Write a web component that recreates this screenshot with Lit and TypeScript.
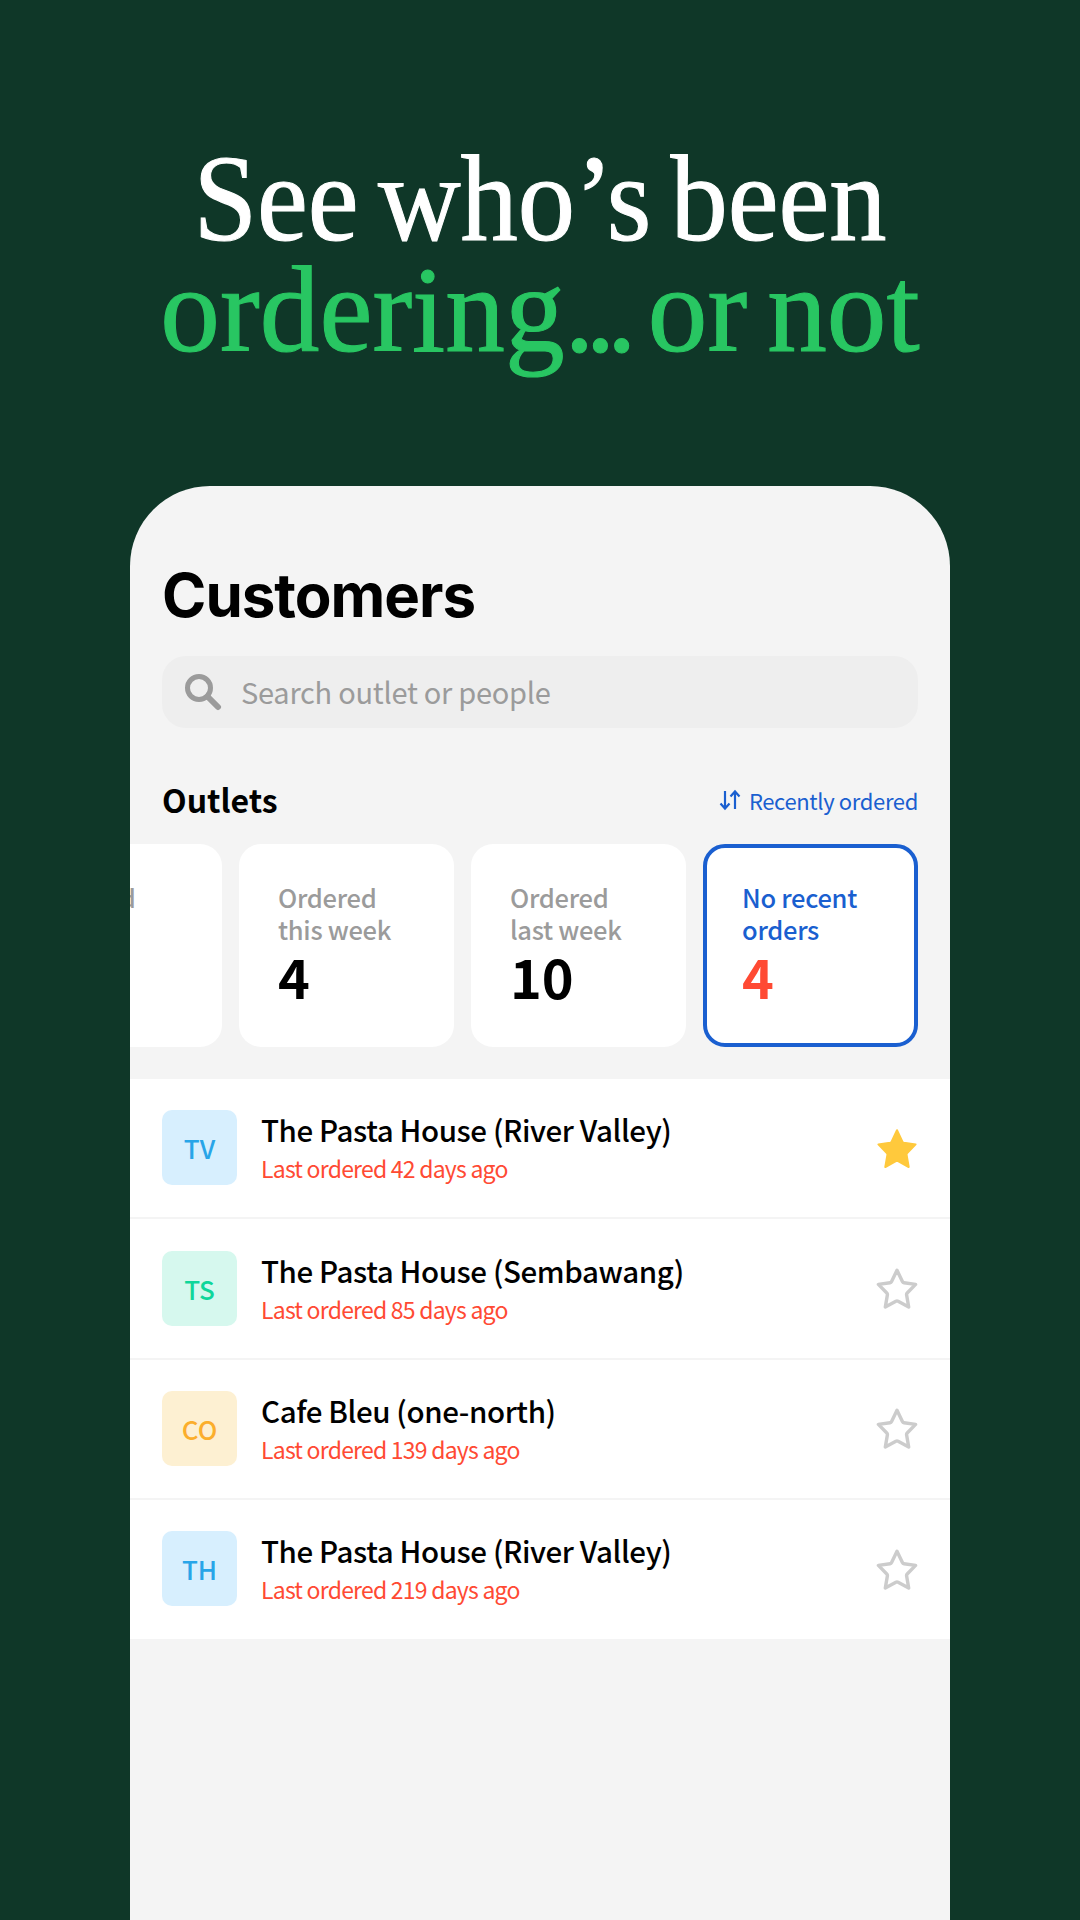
import { LitElement, html, css, svg } from "lit";
import { customElement } from "lit/decorators.js";

const STAR = "M21 3.2 L26.4 14.6 Q26.9 15.6 28 15.8 L39.6 17.4 L31.2 26 Q30.4 26.8 30.6 27.9 L32.7 40 L22.1 34.2 Q21 33.6 19.9 34.2 L9.3 40 L11.4 27.9 Q11.6 26.8 10.8 26 L2.4 17.4 L14 15.8 Q15.1 15.6 15.6 14.6 Z";

const rows = [
  { i: "TV", bg: "#d7effe", fg: "#28a5e8", name: "The Pasta House (River Valley)", days: 42, fav: true },
  { i: "TS", bg: "#d6f8ee", fg: "#0fd69a", name: "The Pasta House (Sembawang)", days: 85, fav: false },
  { i: "CO", bg: "#fdf0d2", fg: "#fbae2c", name: "Cafe Bleu (one-north)", days: 139, fav: false },
  { i: "TH", bg: "#d7effe", fg: "#28a5e8", name: "The Pasta House (River Valley)", days: 219, fav: false },
];

@customElement("app-root")
export class AppRoot extends LitElement {
  static styles = css`
    :host { display: block; width: 1080px; height: 1920px; background: #0f3728; overflow: hidden;
      font-family: "Noto Sans CJK SC", "Noto Sans", sans-serif; color: #000; }
    .hero { height: 486px; box-sizing: border-box; padding-top: 143px; text-align: center;
      font-family: "Liberation Serif", serif; font-size: 122px; line-height: 111px; color: #fff; word-spacing: -10px; }
    .hero div { white-space: nowrap; transform: scaleX(0.938); -webkit-text-stroke: 1.1px currentColor; }
    .hero .green { color: #28c662; transform: scaleX(0.978); }
    .dots { letter-spacing: -9px; }
    .phone { margin: 0 130px; height: 1434px; background: #f4f4f4; border-radius: 80px 80px 0 0; overflow: hidden; }
    .head { padding: 72px 32px 0; }
    h1 { margin: 0; font-family: Inter, sans-serif; font-weight: 700; font-size: 60px; line-height: 74px; letter-spacing: -1px; }
    .search { margin-top: 24px; height: 72px; border-radius: 24px; background: #eeeeee; display: flex; align-items: center;
      padding-left: 22px; gap: 19px; color: #9b9b9b; font-size: 29px; letter-spacing: -0.27px; }
    .search svg { width: 38px; height: 38px; flex: none; }
    .search span { padding-bottom: 2px; }
    .section { margin-top: 45px; display: flex; justify-content: space-between; align-items: center; height: 52px; }
    .section b { font-size: 32px; font-weight: 700; }
    .sort { display: flex; align-items: center; gap: 8px; color: #1a5fd0; font-size: 22px; letter-spacing: -0.35px; font-weight: 400; padding-top: 2px; }
    .sort svg { width: 22px; height: 22px; }
    .cards { margin-top: 19px; display: flex; justify-content: flex-end; gap: 17px; padding-right: 32px; overflow: hidden; }
    .card { flex: 0 0 215px; height: 203px; box-sizing: border-box; background: #fff; border-radius: 22px; padding: 37px 39px 0; }
    .card.first { padding-left: 30px; }
    .card .t { font-size: 25.5px; line-height: 31.5px; font-weight: 500; color: #9b9b9b; white-space: pre-line; letter-spacing: -0.3px; }
    .card .n { font-size: 54px; line-height: 62px; font-weight: 700; margin-top: 1px; }
    .card.sel { border: 4px solid #1a5fd0; padding: 33px 35px 0; }
    .card.sel .t { color: #1a5fd0; }
    .card.sel .n { color: #ff4a33; }
    .list { margin-top: 32px; background: #fff; }
    .row { height: 138.4px; box-sizing: content-box; display: flex; align-items: center; padding: 0 32px; gap: 24px; border-bottom: 2px solid #f4f4f4; }
    .row:last-child { border-bottom: 0; }
    .avatar { width: 75px; height: 75px; margin-top: -1px; border-radius: 10px; display: flex; align-items: center; justify-content: center; font-size: 26px; font-weight: 500; }
    .info { flex: 1; min-width: 0; }
    .name { font-size: 29.5px; line-height: 36px; font-weight: 500; letter-spacing: -0.4px; margin-top: -2px; }
    .sub { font-size: 23px; line-height: 30px; color: #ff4a33; margin-top: 6px; letter-spacing: -0.78px; }
    .star { width: 42px; height: 42px; flex: none; margin-top: -1px; }
  `;

  private card(t: string, n: string, cls = "") {
    return html`<div class="card ${cls}"><div class="t">${t}</div><div class="n">${n}</div></div>`;
  }

  render() {
    return html`
      <div class="hero"><div>See who’s been</div><div class="green">ordering<span class="dots">...</span> or not</div></div>
      <div class="phone">
        <div class="head">
          <h1>Customers</h1>
          <div class="search">
            <svg viewBox="0 0 38 38" fill="none" stroke="#9b9b9b"><circle cx="15" cy="15" r="11.5" stroke-width="5"/><path d="M23.5 23.5 L34 34" stroke-width="6" stroke-linecap="round"/></svg>
            <span>Search outlet or people</span>
          </div>
          <div class="section"><b>Outlets</b>
            <span class="sort"><svg viewBox="0 0 22 22" fill="none" stroke="#1a5fd0" stroke-width="2.2"><path d="M6 2 V19 M1.5 14.5 L6 19.5 L10.5 14.5 M16 20 V3 M11.5 7.5 L16 2.5 L20.5 7.5"/></svg>Recently ordered</span>
          </div>
        </div>
        <div class="cards">
          ${this.card("Ordered\nearlier", "2", "first")}
          ${this.card("Ordered\nthis week", "4")}
          ${this.card("Ordered\nlast week", "10")}
          ${this.card("No recent\norders", "4", "sel")}
        </div>
        <div class="list">
          ${rows.map(r => html`<div class="row">
            <div class="avatar" style="background:${r.bg};color:${r.fg}">${r.i}</div>
            <div class="info"><div class="name">${r.name}</div><div class="sub">Last ordered ${r.days} days ago</div></div>
            <svg class="star" viewBox="0 0 42 42">${r.fav
              ? svg`<path d=${STAR} fill="#ffc93c" stroke="#ffc93c" stroke-width="2" stroke-linejoin="round"/>`
              : svg`<path d=${STAR} fill="none" stroke="#cccccc" stroke-width="3.4" stroke-linejoin="round"/>`}</svg>
          </div>`)}
        </div>
      </div>
    `;
  }
}
